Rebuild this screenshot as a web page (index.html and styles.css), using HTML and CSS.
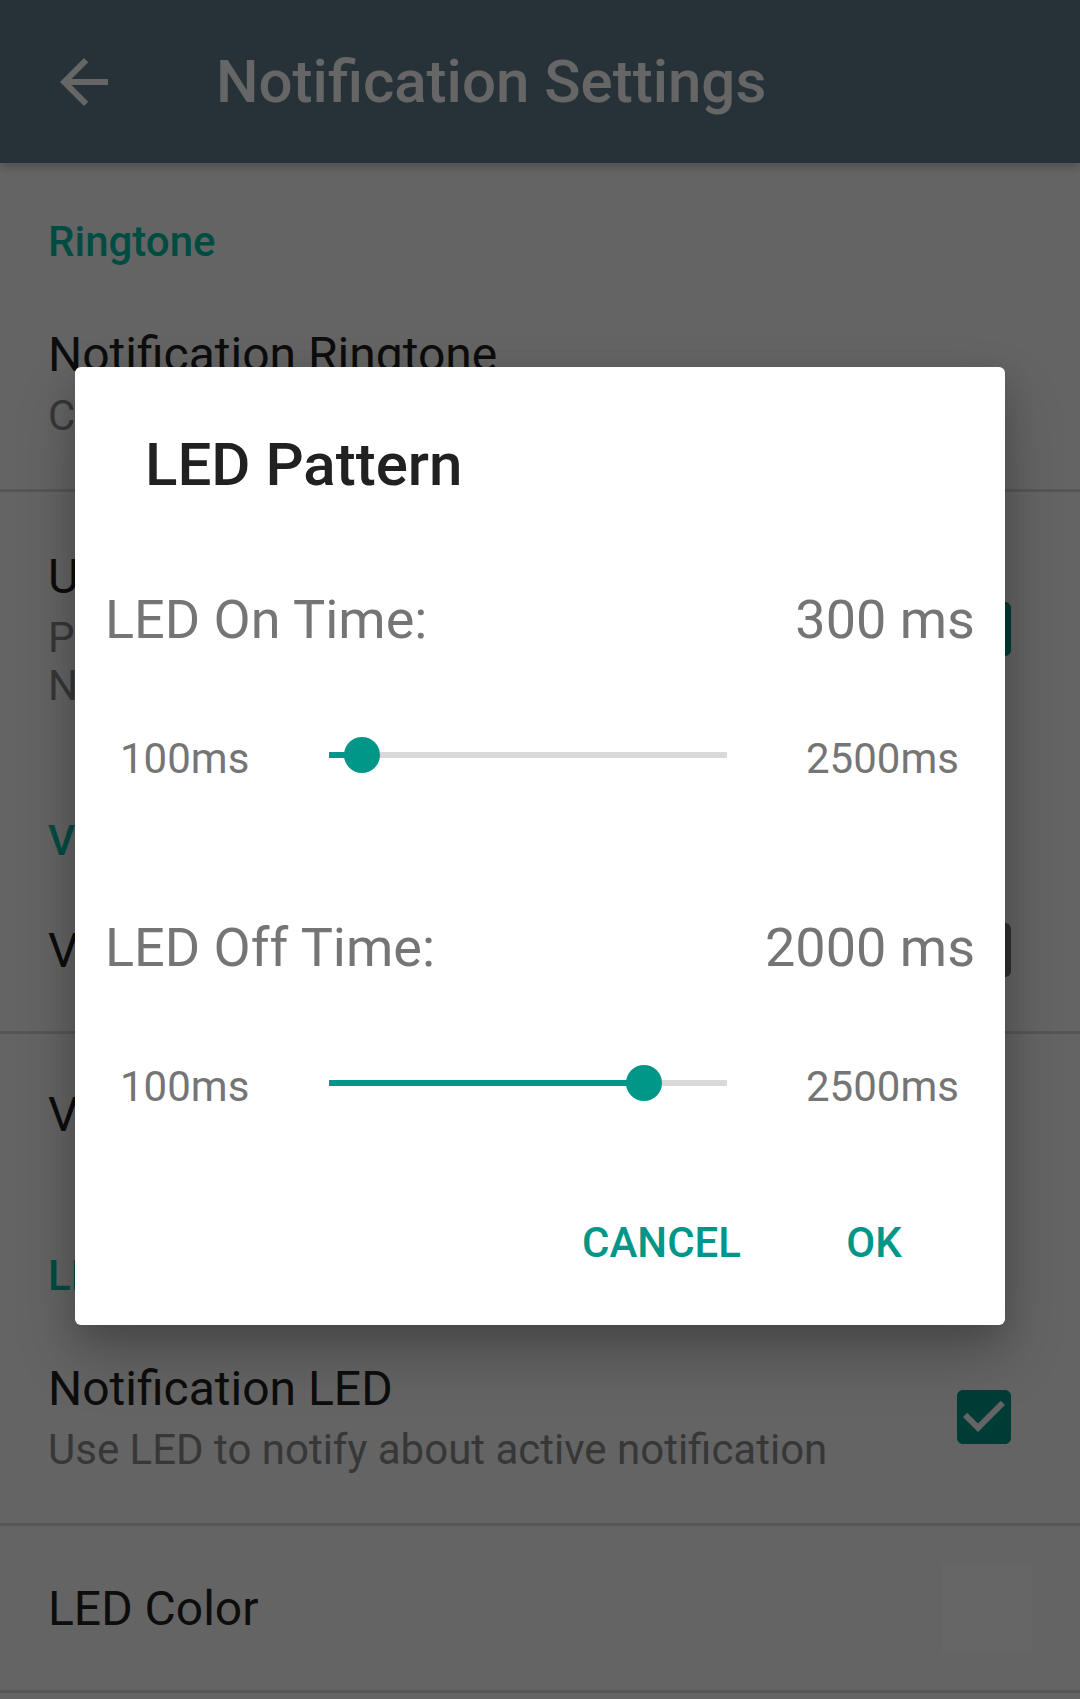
FILE: index.html
```html
<!DOCTYPE html>
<html lang="en">
<head>
<meta charset="utf-8">
<title>Notification Settings</title>
<link rel="stylesheet" href="styles.css">
</head>
<body>
<div class="screen">
  <header class="appbar">
    <svg class="back" viewBox="0 0 24 24" aria-hidden="true"><path d="M20 11H7.83l5.59-5.59L12 4l-8 8 8 8 1.41-1.41L7.83 13H20v-2z"/></svg>
    <h1 class="appbar-title">Notification Settings</h1>
  </header>

  <main class="prefs">
    <div class="category first">Ringtone</div>
    <div class="pref two-line divided">
      <div class="pref-text">
        <div class="pref-title">Notification Ringtone</div>
        <div class="pref-summary">Choose notification sound</div>
      </div>
    </div>
    <div class="pref two-line">
      <div class="pref-text">
        <div class="pref-title">Use ringtone in silent mode</div>
        <div class="pref-summary">Play ringtone even in silent mode<br>Not recommended</div>
      </div>
      <svg class="checkbox" viewBox="0 0 24 24" aria-hidden="true"><path class="cb-on" d="M19 3H5c-1.11 0-2 .9-2 2v14c0 1.1.89 2 2 2h14c1.11 0 2-.9 2-2V5c0-1.1-.89-2-2-2zm-9 14l-5-5 1.41-1.41L10 14.17l7.59-7.59L19 8l-9 9z"/></svg>
    </div>

    <div class="category">Vibration</div>
    <div class="pref divided vibrate">
      <div class="pref-text"><div class="pref-title">Vibrate</div></div>
      <svg class="checkbox" viewBox="0 0 24 24" aria-hidden="true"><path class="cb-off" d="M19 5v14H5V5h14m0-2H5c-1.1 0-2 .9-2 2v14c0 1.1.9 2 2 2h14c1.1 0 2-.9 2-2V5c0-1.1-.9-2-2-2z"/></svg>
    </div>
    <div class="pref pattern">
      <div class="pref-text"><div class="pref-title">Vibration Pattern</div></div>
    </div>

    <div class="category">LED</div>
    <div class="pref two-line divided">
      <div class="pref-text">
        <div class="pref-title">Notification LED</div>
        <div class="pref-summary">Use LED to notify about active notification</div>
      </div>
      <svg class="checkbox" viewBox="0 0 24 24" aria-hidden="true"><path class="cb-on" d="M19 3H5c-1.11 0-2 .9-2 2v14c0 1.1.89 2 2 2h14c1.11 0 2-.9 2-2V5c0-1.1-.89-2-2-2zm-9 14l-5-5 1.41-1.41L10 14.17l7.59-7.59L19 8l-9 9z"/></svg>
    </div>
    <div class="pref divided color">
      <div class="pref-text"><div class="pref-title">LED Color</div></div>
      <div class="swatch"></div>
    </div>
  </main>

  <div class="scrim"></div>

  <section class="dialog">
    <h2 class="dialog-title">LED Pattern</h2>

    <div class="setting first-setting">
      <div class="setting-head">
        <span class="setting-label">LED On Time:</span>
        <span class="setting-value">300 ms</span>
      </div>
      <div class="slider-row">
        <span class="range-min">100ms</span>
        <div class="track">
          <div class="track-fill" style="width: 8.33%"></div>
          <div class="thumb" style="left: 8.33%"></div>
        </div>
        <span class="range-max">2500ms</span>
      </div>
    </div>

    <div class="setting second-setting">
      <div class="setting-head">
        <span class="setting-label">LED Off Time:</span>
        <span class="setting-value">2000 ms</span>
      </div>
      <div class="slider-row">
        <span class="range-min">100ms</span>
        <div class="track">
          <div class="track-fill" style="width: 79.17%"></div>
          <div class="thumb" style="left: 79.17%"></div>
        </div>
        <span class="range-max">2500ms</span>
      </div>
    </div>

    <div class="actions">
      <button class="btn btn-cancel" type="button">CANCEL</button>
      <button class="btn btn-ok" type="button">OK</button>
    </div>
  </section>
</div>
</body>
</html>
```

FILE: styles.css
```css
html, body {
  margin: 0;
  padding: 0;
  background: #fafafa;
}

body {
  font-family: Roboto, "Liberation Sans", Arial, sans-serif;
  color: #212121;
}

.screen {
  position: relative;
  width: 1080px;
  height: 1699px;
  overflow: hidden;
  background: #fafafa;
}

/* App bar */
.appbar {
  position: relative;
  z-index: 1;
  height: 163px;
  display: flex;
  align-items: center;
  padding-left: 48px;
  background: #607d8b;
  box-shadow: 0 4px 10px rgba(0, 0, 0, 0.22);
}

.back {
  width: 72px;
  height: 72px;
  flex: none;
  fill: #ffffff;
}

.appbar-title {
  margin: 0 0 0 96px;
  font-size: 60px;
  line-height: 80px;
  font-weight: 500;
  color: #ffffff;
}

/* Preference list */
.prefs {
  display: flex;
  flex-direction: column;
}

.category {
  padding: 54px 48px 0;
  font-size: 42px;
  line-height: 56px;
  font-weight: 500;
  color: #00bfa5;
}

.category.first {
  padding-top: 51px;
}

.pref {
  min-height: 162px;
  box-sizing: border-box;
  display: flex;
  align-items: center;
  padding: 0 48px;
}

.pref.vibrate {
  min-height: 165px;
}

.pref.pattern {
  min-height: 160px;
}

.pref.color {
  min-height: 167px;
}

.pref.two-line {
  padding-top: 55px;
  padding-bottom: 49px;
}

.pref.divided {
  border-bottom: 3px solid #d6d6d6;
}

.pref-text {
  flex: 1;
  min-width: 0;
}

.pref-title {
  font-size: 48px;
  line-height: 60px;
  color: #212121;
  white-space: nowrap;
}

.pref:not(.two-line) .pref-title {
  padding-top: 2px;
}

.pref-summary {
  margin-top: 7px;
  font-size: 42px;
  line-height: 48px;
  color: #8a8a8a;
  white-space: nowrap;
}

.checkbox {
  width: 72px;
  height: 72px;
  flex: none;
  margin-right: 12px;
}

.cb-on {
  fill: #009688;
}

.cb-off {
  fill: #757575;
}

.swatch {
  width: 90px;
  height: 90px;
  flex: none;
  background: #ffffff;
}

/* Scrim */
.scrim {
  position: absolute;
  inset: 0;
  z-index: 2;
  background: rgba(0, 0, 0, 0.6);
}

/* Dialog */
.dialog {
  position: absolute;
  z-index: 3;
  left: 75px;
  top: 367px;
  width: 930px;
  box-sizing: border-box;
  padding: 58px 30px 28px;
  background: #ffffff;
  border-radius: 6px;
  box-shadow: 0 30px 60px rgba(0, 0, 0, 0.22), 0 10px 30px rgba(0, 0, 0, 0.14);
  display: flex;
  flex-direction: column;
}

.dialog-title {
  margin: 0;
  padding-left: 40px;
  font-size: 60px;
  line-height: 80px;
  font-weight: 500;
  color: #212121;
}

.first-setting {
  margin-top: 83px;
}

.second-setting {
  margin-top: 125px;
}

.setting-head {
  display: flex;
  justify-content: space-between;
  align-items: center;
  height: 64px;
  font-size: 54px;
  line-height: 64px;
  color: #757575;
}

.slider-row {
  margin-top: 67px;
  height: 72px;
  display: grid;
  grid-template-columns: 224px 398px 1fr;
  align-items: center;
  font-size: 42px;
  line-height: 50px;
  color: #757575;
}

.range-min {
  padding-left: 15px;
  padding-top: 7px;
}

.range-max {
  padding-left: 79px;
  padding-top: 7px;
}

.track {
  position: relative;
  height: 6px;
  background: #d9d9d9;
}

.track-fill {
  height: 100%;
  background: #009688;
}

.thumb {
  position: absolute;
  top: 50%;
  width: 36px;
  height: 36px;
  border-radius: 50%;
  background: #009688;
  transform: translate(-50%, -50%);
}

.actions {
  margin-top: 70px;
  display: flex;
  justify-content: flex-end;
  gap: 13px;
  padding-right: 5px;
}

.btn {
  height: 108px;
  border: none;
  background: transparent;
  font-family: Roboto, "Liberation Sans", Arial, sans-serif;
  font-size: 42px;
  line-height: 50px;
  font-weight: 500;
  color: #009688;
  padding: 0 24px;
  margin: 0;
}

.btn-ok {
  width: 192px;
  padding: 0;
}
```
